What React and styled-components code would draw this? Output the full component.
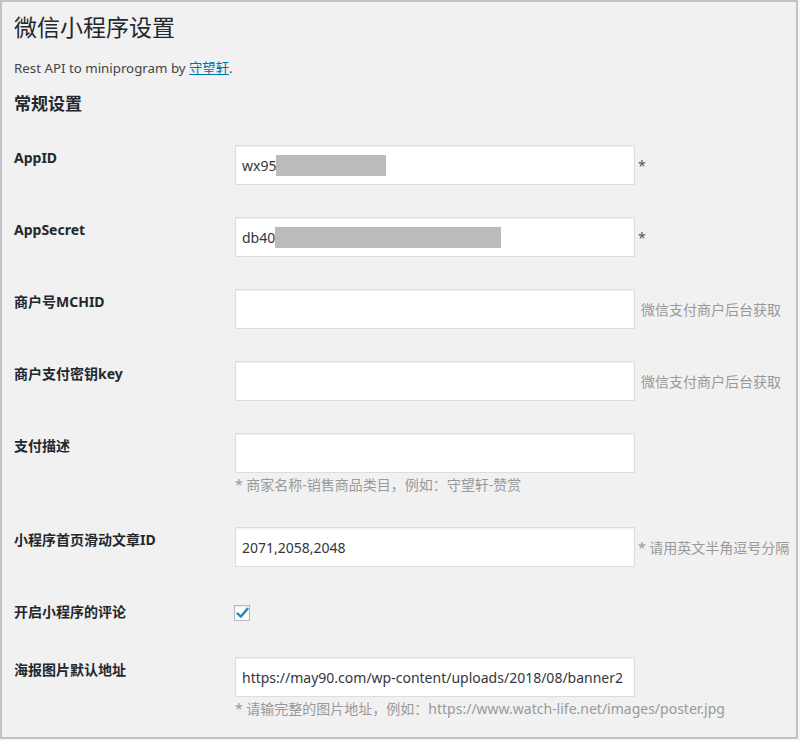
import React from "react";
import styled, { createGlobalStyle } from "styled-components";

const Global = createGlobalStyle`
  html, body { margin: 0; padding: 0; background: #f7f7f7; }
  body { font-family: "Noto Sans", "Noto Sans CJK SC", sans-serif; color: #23282d; }
  * { box-sizing: border-box; }
`;

const Frame = styled.div`
  width: 798px;
  height: 739px;
  border: 2px solid #c2c2c2;
  background: #f1f1f1;
  padding: 10px 0 0 12px;
  overflow: hidden;
`;

const Title = styled.h1`
  margin: 0;
  font-size: 23px;
  font-weight: 400;
  line-height: 30px;
  color: #23282d;
`;

const Intro = styled.p`
  margin: 16px 0 0;
  font-size: 13.3px;
  line-height: 20px;
  color: #444;
  a { color: #0073aa; text-decoration: underline; }
`;

const Section = styled.h2`
  margin: 15px 0 0;
  font-size: 17px;
  font-weight: 700;
  line-height: 22px;
  color: #23282d;
`;

const Table = styled.div`
  margin-top: 14px;
  display: grid;
  grid-template-columns: 221px 1fr;
`;

const Label = styled.div`
  padding-top: 20px;
  font-size: 14px;
  font-weight: 700;
  line-height: 18px;
  color: #23282d;
`;

const Cell = styled.div`
  padding: 16px 0;
`;

const CheckCell = styled.div`
  display: flex;
  align-items: flex-start;
  padding: 22px 0 20px;
`;

const Line = styled.div`
  display: flex;
  align-items: center;
  gap: 3px;
`;

const Box = styled.div`
  width: 400px;
  height: 40px;
  background: #fff;
  border: 1px solid #ddd;
  box-shadow: inset 0 1px 2px rgba(0, 0, 0, 0.07);
  padding: 0 6px;
  display: flex;
  align-items: center;
  font-size: 14px;
  color: #32373c;
  white-space: nowrap;
  overflow: hidden;
  flex-shrink: 0;
`;

const Mask = styled.span`
  display: inline-block;
  width: ${(p) => p.$w}px;
  height: 21px;
  background: #bbb;
`;

const Hint = styled.span`
  font-size: 14px;
  color: ${(p) => (p.$star ? "#555" : "#999")};
  margin-left: ${(p) => p.$gap || 0}px;
  white-space: nowrap;
`;

const Desc = styled.p`
  margin: 2px 0 0;
  font-size: 14px;
  line-height: 20px;
  color: #999;
  white-space: nowrap;
`;

const Check = styled.span`
  display: flex;
  align-items: center;
  justify-content: center;
  width: 16px;
  height: 16px;
  margin-left: -1px;
  background: #fff;
  border: 1px solid #b4b9be;
  box-shadow: inset 0 1px 2px rgba(0, 0, 0, 0.1);
`;

function CheckMark() {
  return (
    <svg width="13" height="12" viewBox="0 0 13 12">
      <path d="M1.5 6.5 L4.8 9.6 L11.5 1.8" fill="none" stroke="#1e8cbe" strokeWidth="2.4" strokeLinecap="round" strokeLinejoin="round" />
    </svg>
  );
}

export default function App() {
  return (
    <>
      <Global />
      <Frame>
        <Title>微信小程序设置</Title>
        <Intro>
          Rest API to miniprogram by <a href="#">守望轩</a>.
        </Intro>
        <Section>常规设置</Section>
        <Table>
          <Label>AppID</Label>
          <Cell>
            <Line>
              <Box>wx95<Mask $w={110} /></Box>
              <Hint $star>*</Hint>
            </Line>
          </Cell>

          <Label>AppSecret</Label>
          <Cell>
            <Line>
              <Box>db40<Mask $w={226} /></Box>
              <Hint $star>*</Hint>
            </Line>
          </Cell>

          <Label>商户号MCHID</Label>
          <Cell>
            <Line>
              <Box />
              <Hint $gap={3}>微信支付商户后台获取</Hint>
            </Line>
          </Cell>

          <Label>商户支付密钥key</Label>
          <Cell>
            <Line>
              <Box />
              <Hint $gap={3}>微信支付商户后台获取</Hint>
            </Line>
          </Cell>

          <Label>支付描述</Label>
          <Cell>
            <Box />
            <Desc>* 商家名称-销售商品类目，例如：守望轩-赞赏</Desc>
          </Cell>

          <Label>小程序首页滑动文章ID</Label>
          <Cell>
            <Line>
              <Box>2071,2058,2048</Box>
              <Hint>* 请用英文半角逗号分隔</Hint>
            </Line>
          </Cell>

          <Label>开启小程序的评论</Label>
          <CheckCell>
            <Check><CheckMark /></Check>
          </CheckCell>

          <Label>海报图片默认地址</Label>
          <Cell>
            <Box>https://may90.com/wp-content/uploads/2018/08/banner2</Box>
            <Desc>* 请输完整的图片地址，例如：https://www.watch-life.net/images/poster.jpg</Desc>
          </Cell>
        </Table>
      </Frame>
    </>
  );
}
